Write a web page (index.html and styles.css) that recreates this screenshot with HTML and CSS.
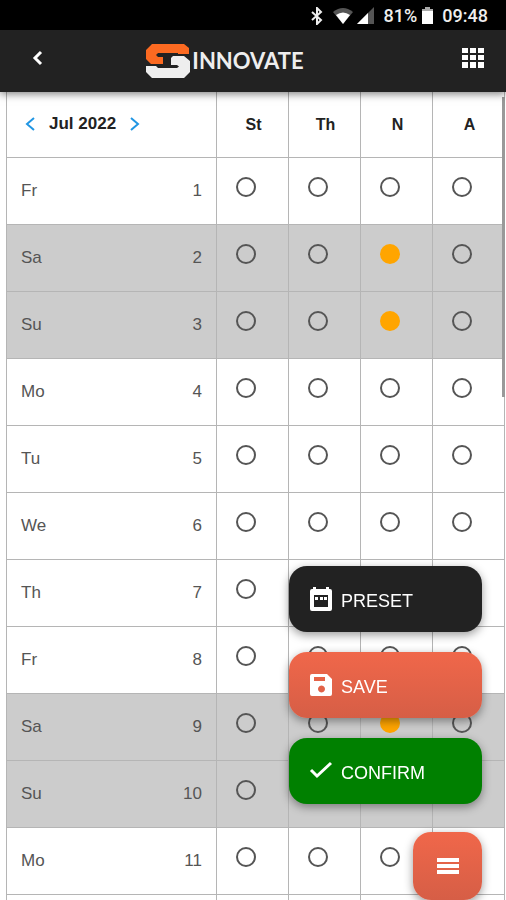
FILE: index.html
```html
<!DOCTYPE html>
<html lang="en">
<head>
<meta charset="utf-8">
<meta name="viewport" content="width=device-width, initial-scale=1">
<title>Innovate</title>
<link rel="stylesheet" href="styles.css">
</head>
<body>
<div class="app">
  <div class="status">
    <svg class="status-bt" width="14" height="18" viewBox="0 0 14 18" fill="none" stroke="currentColor" stroke-width="2"><path d="M2 5l9 8-4 4V1l4 4-9 8"/></svg>
    <svg class="status-wifi" width="20" height="18" viewBox="0 0 20 18"><path fill="#555" d="M0 5Q10-3 20 5L10 17z"/><path fill="#fff" d="M3 8Q10 3 17 8L10 17z"/></svg>
    <svg class="status-signal" width="17" height="18" viewBox="0 0 17 18"><path fill="#555" d="M17 0v17H0z"/><path fill="#fff" d="M11 6v11H0z"/></svg>
    <span class="status-level">81%</span>
    <svg class="status-battery" width="11" height="18" viewBox="0 0 11 18"><path fill="#aaa" d="M3 0h5v2h3v3H0V2h3z"/><path fill="#fff" d="M0 4h11v13H0z"/></svg>
    <span>09:48</span>
  </div>
  <header class="bar">
    <button class="icon-button" type="button" aria-label="Back">
      <svg width="12" height="16" viewBox="0 0 12 16" fill="none" stroke="currentColor" stroke-width="3"><path d="M10 2L4 8l6 6"/></svg>
    </button>
    <div class="brand">
      <svg width="44" height="34" viewBox="0 0 44 34">
        <path fill="#fc6a21" d="M6 0H38L43 4V10H32V9H12L10 11L12 13H17V20H5L0 15V6z"/>
        <path fill="#eee" d="M27 12H38L44 17V28L38 34H6L0 28V22H10L12 24H31L33 22.500L31 21H25V14z"/>
      </svg>
      <span class="brand-name">INNOVATE</span>
    </div>
    <button class="icon-button" type="button" aria-label="Apps">
      <svg width="22" height="22" viewBox="0 0 22 22" fill="currentColor"><path d="M0 1h6v5H0zM8 1h6v5H8zM16 1h6v5h-6zM0 8h6v5H0zM8 8h6v5H8zM16 8h6v5h-6zM0 15h6v6H0zM8 15h6v6H8zM16 15h6v6h-6z"/></svg>
    </button>
  </header>
  <main class="content">
    <table class="days">
      <colgroup><col><col class="slot"><col class="slot"><col class="slot"><col class="slot"></colgroup>
      <thead>
        <tr>
          <th scope="col">
            <div class="month">
              <button class="month-step" type="button" aria-label="Previous month"><svg width="10" height="14" viewBox="0 0 10 14" fill="none" stroke="currentColor" stroke-width="2"><path d="M9 1L2 7l7 6"/></svg></button>
              <span>Jul 2022</span>
              <button class="month-step" type="button" aria-label="Next month"><svg width="10" height="14" viewBox="0 0 10 14" fill="none" stroke="currentColor" stroke-width="2"><path d="M1 1l7 6-7 6"/></svg></button>
            </div>
          </th>
          <th scope="col">St</th><th scope="col">Th</th><th scope="col">N</th><th scope="col">A</th>
        </tr>
      </thead>
      <tbody>
        <tr><th scope="row"><div class="day"><span>Fr</span><span>1</span></div></th><td><input type="checkbox" aria-label="St 1"></td><td><input type="checkbox" aria-label="Th 1"></td><td><input type="checkbox" aria-label="N 1"></td><td><input type="checkbox" aria-label="A 1"></td></tr>
        <tr class="weekend"><th scope="row"><div class="day"><span>Sa</span><span>2</span></div></th><td><input type="checkbox" aria-label="St 2"></td><td><input type="checkbox" aria-label="Th 2"></td><td><input type="checkbox" aria-label="N 2" checked></td><td><input type="checkbox" aria-label="A 2"></td></tr>
        <tr class="weekend"><th scope="row"><div class="day"><span>Su</span><span>3</span></div></th><td><input type="checkbox" aria-label="St 3"></td><td><input type="checkbox" aria-label="Th 3"></td><td><input type="checkbox" aria-label="N 3" checked></td><td><input type="checkbox" aria-label="A 3"></td></tr>
        <tr><th scope="row"><div class="day"><span>Mo</span><span>4</span></div></th><td><input type="checkbox" aria-label="St 4"></td><td><input type="checkbox" aria-label="Th 4"></td><td><input type="checkbox" aria-label="N 4"></td><td><input type="checkbox" aria-label="A 4"></td></tr>
        <tr><th scope="row"><div class="day"><span>Tu</span><span>5</span></div></th><td><input type="checkbox" aria-label="St 5"></td><td><input type="checkbox" aria-label="Th 5"></td><td><input type="checkbox" aria-label="N 5"></td><td><input type="checkbox" aria-label="A 5"></td></tr>
        <tr><th scope="row"><div class="day"><span>We</span><span>6</span></div></th><td><input type="checkbox" aria-label="St 6"></td><td><input type="checkbox" aria-label="Th 6"></td><td><input type="checkbox" aria-label="N 6"></td><td><input type="checkbox" aria-label="A 6"></td></tr>
        <tr><th scope="row"><div class="day"><span>Th</span><span>7</span></div></th><td><input type="checkbox" aria-label="St 7"></td><td><input type="checkbox" aria-label="Th 7"></td><td><input type="checkbox" aria-label="N 7"></td><td><input type="checkbox" aria-label="A 7"></td></tr>
        <tr><th scope="row"><div class="day"><span>Fr</span><span>8</span></div></th><td><input type="checkbox" aria-label="St 8"></td><td><input type="checkbox" aria-label="Th 8"></td><td><input type="checkbox" aria-label="N 8"></td><td><input type="checkbox" aria-label="A 8"></td></tr>
        <tr class="weekend"><th scope="row"><div class="day"><span>Sa</span><span>9</span></div></th><td><input type="checkbox" aria-label="St 9"></td><td><input type="checkbox" aria-label="Th 9"></td><td><input type="checkbox" aria-label="N 9" checked></td><td><input type="checkbox" aria-label="A 9"></td></tr>
        <tr class="weekend"><th scope="row"><div class="day"><span>Su</span><span>10</span></div></th><td><input type="checkbox" aria-label="St 10"></td><td><input type="checkbox" aria-label="Th 10"></td><td><input type="checkbox" aria-label="N 10"></td><td><input type="checkbox" aria-label="A 10"></td></tr>
        <tr><th scope="row"><div class="day"><span>Mo</span><span>11</span></div></th><td><input type="checkbox" aria-label="St 11"></td><td><input type="checkbox" aria-label="Th 11"></td><td><input type="checkbox" aria-label="N 11"></td><td><input type="checkbox" aria-label="A 11"></td></tr>
        <tr><th scope="row"><div class="day"></div></th><td></td><td></td><td></td><td></td></tr>
      </tbody>
    </table>
    <div class="scroll-thumb"></div>
  </main>
  <div class="actions">
    <button class="action action-preset" type="button">
      <svg width="24" height="26" viewBox="0 0 24 26"><path fill="currentColor" fill-rule="evenodd" d="M4 1h3v2h10V1h3v2h1q2 0 2 2v18q0 2-2 2H3q-2 0-2-2V5q0-2 2-2h1zM5 9v12h14V9z"/><path fill="currentColor" d="M6 11h3v3H6zM11 11h3v3h-3zM15 11h3v3h-3z"/></svg>
      <span class="action-label">PRESET</span>
    </button>
    <button class="action action-save" type="button">
      <svg width="24" height="24" viewBox="0 0 24 24"><path fill="currentColor" fill-rule="evenodd" d="M3 1h15l5 5v15q0 2-2 2H3q-2 0-2-2V3q0-2 2-2zM5 4v4h11V4zM12.500 12.500a3.500 3.500 0 1 0 .01 0z"/></svg>
      <span class="action-label">SAVE</span>
    </button>
    <button class="action action-confirm" type="button">
      <svg width="24" height="24" viewBox="0 0 24 24" fill="none" stroke="currentColor" stroke-width="3"><path d="M2 11l6 6L22 4"/></svg>
      <span class="action-label">CONFIRM</span>
    </button>
    <button class="menu" type="button" aria-label="Menu">
      <svg width="24" height="18" viewBox="0 0 24 18" fill="currentColor"><path d="M1 1h22v4H1zM1 7h22v4H1zM1 13h22v4H1z"/></svg>
    </button>
  </div>
</div>
</body>
</html>
```
FILE: styles.css
```css
* { box-sizing: border-box; }

body {
  margin: 0;
  background: #fff;
  font-family: "Liberation Sans", Arial, sans-serif;
}

button {
  border: 0;
  padding: 0;
  background: none;
  color: inherit;
  font: inherit;
  cursor: pointer;
}

svg { display: block; flex: none; }

.app {
  display: flex;
  flex-direction: column;
  height: 100vh;
  overflow: hidden;
}

.status {
  display: flex;
  flex: none;
  align-items: center;
  justify-content: flex-end;
  height: 30px;
  padding: 2px 18px 0 0;
  background: #000;
  color: #eee;
  font: 500 18px/24px Roboto, sans-serif;
}

.status-wifi { margin-left: 9px; }
.status-signal { margin-left: 4px; }
.status-level { margin-left: 10px; }
.status-battery { margin: 0 9px 0 5px; }

.bar {
  position: relative;
  z-index: 1;
  display: flex;
  flex: none;
  align-items: center;
  height: 62px;
  padding: 0 22px 6px 26px;
  background: #222;
  color: #fff;
  box-shadow: 0 2px 8px rgba(0, 0, 0, 0.5);
}

.icon-button {
  display: grid;
  place-items: center;
  width: 22px;
  height: 40px;
}

.brand {
  display: flex;
  flex: 1;
  align-items: center;
  justify-content: center;
  gap: 2px;
  padding: 6px 60px 0 0;
}

.brand-name {
  color: #eee;
  font: 700 22px/26px Lato, sans-serif;
}

.content {
  position: relative;
  flex: 1;
  min-height: 0;
  overflow: hidden;
  padding: 0 1px 0 6px;
}

.days {
  width: 100%;
  border-collapse: collapse;
  table-layout: fixed;
}

.slot { width: 72px; }

.days th,
.days td {
  height: 67px;
  padding: 0;
  border: 1px solid #b5b5b5;
}

.days thead th {
  height: 65px;
  padding: 2px 0 0 2px;
  border-top: 0;
  color: #222;
  font-size: 16px;
}

.month {
  display: flex;
  align-items: center;
  gap: 14px;
  padding: 0 16px 2px;
  font-size: 17px;
}

.month-step { color: #2196e3; }

.day {
  display: flex;
  justify-content: space-between;
  padding: 0 14px;
  color: #555;
  font-size: 17px;
  font-weight: 400;
}

.weekend { background: #ccc; }

.days td { padding: 0 0 7px 19px; }

input {
  display: block;
  width: 20px;
  height: 20px;
  margin: 0;
  border: 2px solid #555;
  border-radius: 50%;
  appearance: none;
}

input:checked {
  border-color: #ffa500;
  background: #ffa500;
}

.scroll-thumb {
  position: absolute;
  top: 5px;
  right: 1px;
  width: 3px;
  height: 300px;
  background: #999;
}

.actions {
  position: fixed;
  z-index: 2;
  right: 24px;
  bottom: 0;
  display: flex;
  flex-direction: column;
  align-items: flex-end;
  gap: 20px;
}

.action,
.menu {
  border-radius: 18px;
  color: #fff;
  box-shadow: 0 3px 10px rgba(0, 0, 0, 0.4);
}

.action {
  display: flex;
  align-items: center;
  gap: 8px;
  width: 193px;
  height: 66px;
  padding: 0 20px;
  font-size: 18px;
}

.action-label { padding-top: 5px; }

.action-preset { background: #222; }
.action-save,
.menu { background: linear-gradient(#f0674a, #d65e46); }
.action-confirm { background: #008000; }

.menu {
  display: grid;
  place-items: center;
  width: 69px;
  height: 68px;
  margin-top: 8px;
}
```
